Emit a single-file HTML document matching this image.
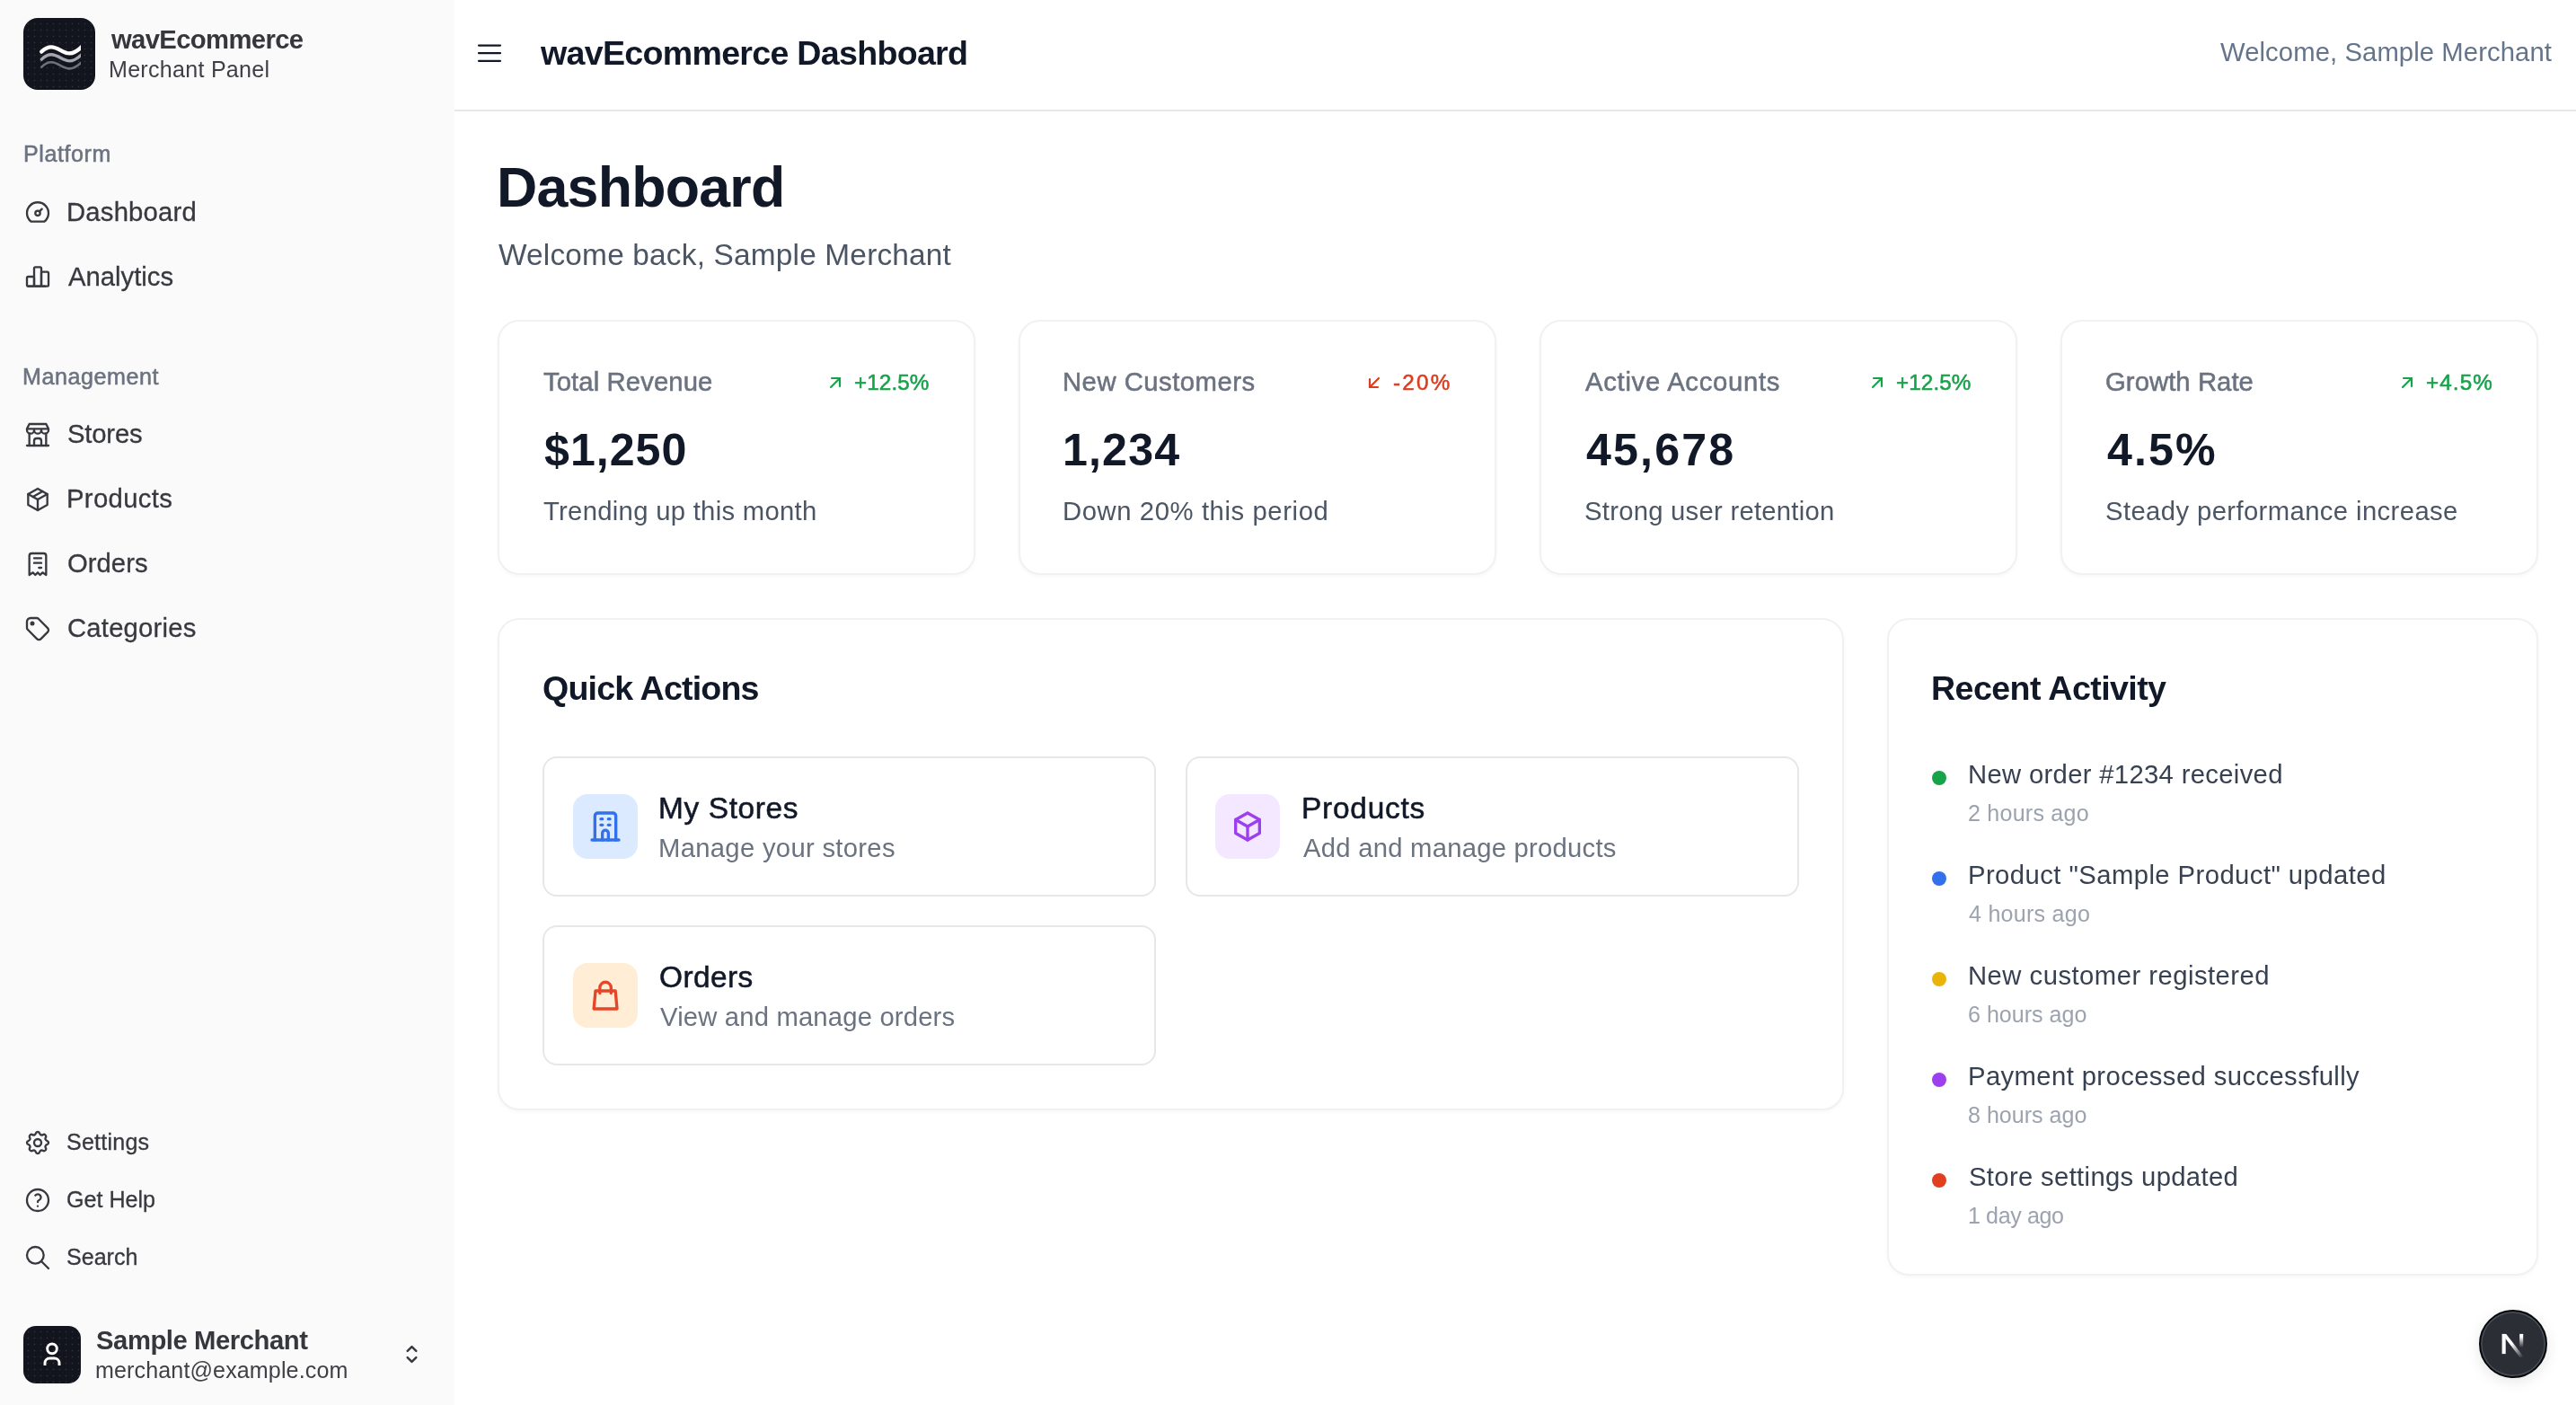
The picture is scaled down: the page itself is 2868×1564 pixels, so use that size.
<!DOCTYPE html>
<html lang="en"><head><meta charset="utf-8"><title>wavEcommerce Dashboard</title>
<style>
html,body{margin:0;padding:0;width:2868px;height:1564px;overflow:hidden;background:#ffffff;font-family:"Liberation Sans",sans-serif}
@media (max-width:2000px){html{zoom:0.5}}
.b{position:absolute}
.ic{position:absolute;overflow:visible}
.t{position:absolute;white-space:nowrap;will-change:transform;font-family:"Liberation Sans",sans-serif}
</style></head>
<body>
<div class="b" style="left:0px;top:0px;width:506px;height:1564px;background:#fafafa"></div>
<div class="b" style="left:506px;top:122px;width:2362px;height:2px;background:#e5e7eb"></div>
<div class="b" style="left:26px;top:20px;width:80px;height:80px;background-color:#12151d;background-image:radial-gradient(circle,rgba(255,255,255,0.13) 0.7px,transparent 1.1px);background-size:7px 7px;background-position:2px 3px;border-radius:16px"></div>
<svg class="ic" style="left:26px;top:20px" width="80" height="80" viewBox="0 0 80 80" fill="none" stroke-linecap="round">
<defs><clipPath id="lc"><rect x="0" y="0" width="64" height="80"/></clipPath></defs>
<g clip-path="url(#lc)">
<path d="M20.3 37.6 C 23.8 34, 27.5 32.3, 31.3 32.3 C 38 32.3, 44.5 39.4, 51.4 39.4 C 56 39.4, 61 36.5, 67 30" stroke="#ffffff" stroke-width="4.3"/>
<path d="M20.3 46.1 C 23.8 42.5, 27.5 40.8, 31.3 40.8 C 38 40.8, 44.5 47.9, 51.4 47.9 C 56 47.9, 61 45, 67 38.5" stroke="#a4a7ae" stroke-width="3.4"/>
<path d="M20.3 54.6 C 23.8 51, 27.5 49.3, 31.3 49.3 C 38 49.3, 44.5 56.4, 51.4 56.4 C 56 56.4, 61 53.5, 67 47" stroke="#6d717a" stroke-width="2.6"/>
</g></svg>
<svg class="ic" style="left:26px;top:220px" width="32" height="32" viewBox="0 0 24 24" fill="none" stroke="#38393f" stroke-width="1.75" stroke-linecap="round" stroke-linejoin="round"><path d="M12 13m-2 0a2 2 0 1 0 4 0a2 2 0 1 0 -4 0"/><path d="M13.45 11.55l2.05 -2.05"/><path d="M6.4 20a9 9 0 1 1 11.2 0z"/></svg>
<svg class="ic" style="left:26px;top:292px" width="32" height="32" viewBox="0 0 24 24" fill="none" stroke="#38393f" stroke-width="1.75" stroke-linecap="round" stroke-linejoin="round"><path d="M3 13a1 1 0 0 1 1 -1h4a1 1 0 0 1 1 1v6a1 1 0 0 1 -1 1h-4a1 1 0 0 1 -1 -1z"/><path d="M15 9a1 1 0 0 1 1 -1h4a1 1 0 0 1 1 1v10a1 1 0 0 1 -1 1h-4a1 1 0 0 1 -1 -1z"/><path d="M9 5a1 1 0 0 1 1 -1h4a1 1 0 0 1 1 1v14a1 1 0 0 1 -1 1h-4a1 1 0 0 1 -1 -1z"/><path d="M4 20h14"/></svg>
<svg class="ic" style="left:26px;top:468px" width="32" height="32" viewBox="0 0 24 24" fill="none" stroke="#38393f" stroke-width="1.75" stroke-linecap="round" stroke-linejoin="round"><path d="M3 21l18 0"/><path d="M3 7v1a3 3 0 0 0 6 0v-1m0 1a3 3 0 0 0 6 0v-1m0 1a3 3 0 0 0 6 0v-1h-18l2 -4h14l2 4"/><path d="M5 21l0 -10.15"/><path d="M19 21l0 -10.15"/><path d="M9 21v-4a2 2 0 0 1 2 -2h2a2 2 0 0 1 2 2v4"/></svg>
<svg class="ic" style="left:26px;top:540px" width="32" height="32" viewBox="0 0 24 24" fill="none" stroke="#38393f" stroke-width="1.75" stroke-linecap="round" stroke-linejoin="round"><path d="M12 3l8 4.5l0 9l-8 4.5l-8 -4.5l0 -9l8 -4.5"/><path d="M12 12l8 -4.5"/><path d="M12 12l0 9"/><path d="M12 12l-8 -4.5"/><path d="M16 5.25l-8 4.5"/></svg>
<svg class="ic" style="left:26px;top:612px" width="32" height="32" viewBox="0 0 24 24" fill="none" stroke="#38393f" stroke-width="1.75" stroke-linecap="round" stroke-linejoin="round"><path d="M5 21v-16a2 2 0 0 1 2 -2h10a2 2 0 0 1 2 2v16l-3 -2l-2 2l-2 -2l-2 2l-2 -2l-3 2m4 -14h6m-6 4h6m-2 4h2"/></svg>
<svg class="ic" style="left:26px;top:684px" width="32" height="32" viewBox="0 0 24 24" fill="none" stroke="#38393f" stroke-width="1.75" stroke-linecap="round" stroke-linejoin="round"><path d="M7.5 7.5m-1 0a1 1 0 1 0 2 0a1 1 0 1 0 -2 0"/><path d="M3 6v5.172a2 2 0 0 0 .586 1.414l7.71 7.71a2.41 2.41 0 0 0 3.408 0l5.592 -5.592a2.41 2.41 0 0 0 0 -3.408l-7.71 -7.71a2 2 0 0 0 -1.414 -.586h-5.172a3 3 0 0 0 -3 3z"/></svg>
<svg class="ic" style="left:26px;top:1256px" width="32" height="32" viewBox="0 0 24 24" fill="none" stroke="#38393f" stroke-width="1.75" stroke-linecap="round" stroke-linejoin="round"><path d="M10.325 4.317c.426 -1.756 2.924 -1.756 3.35 0a1.724 1.724 0 0 0 2.573 1.066c1.543 -.94 3.31 .826 2.37 2.37a1.724 1.724 0 0 0 1.065 2.572c1.756 .426 1.756 2.924 0 3.35a1.724 1.724 0 0 0 -1.066 2.573c.94 1.543 -.826 3.31 -2.37 2.37a1.724 1.724 0 0 0 -2.572 1.065c-.426 1.756 -2.924 1.756 -3.35 0a1.724 1.724 0 0 0 -2.573 -1.066c-1.543 .94 -3.31 -.826 -2.37 -2.37a1.724 1.724 0 0 0 -1.065 -2.572c-1.756 -.426 -1.756 -2.924 0 -3.35a1.724 1.724 0 0 0 1.066 -2.573c-.94 -1.543 .826 -3.31 2.37 -2.37c1 .608 2.296 .07 2.572 -1.065z"/><path d="M9 12a3 3 0 1 0 6 0a3 3 0 0 0 -6 0"/></svg>
<svg class="ic" style="left:26px;top:1320px" width="32" height="32" viewBox="0 0 24 24" fill="none" stroke="#38393f" stroke-width="1.75" stroke-linecap="round" stroke-linejoin="round"><path d="M12 12m-9 0a9 9 0 1 0 18 0a9 9 0 1 0 -18 0"/><path d="M12 17l0 .01"/><path d="M12 13.5a1.5 1.5 0 0 1 1 -1.5a2.6 2.6 0 1 0 -3 -4"/></svg>
<svg class="ic" style="left:26px;top:1384px" width="32" height="32" viewBox="0 0 24 24" fill="none" stroke="#38393f" stroke-width="1.75" stroke-linecap="round" stroke-linejoin="round"><path d="M10 10m-7 0a7 7 0 1 0 14 0a7 7 0 1 0 -14 0"/><path d="M21 21l-6 -6"/></svg>
<div class="b" style="left:26px;top:1476px;width:64px;height:64px;background-color:#12151d;background-image:radial-gradient(circle,rgba(255,255,255,0.13) 0.7px,transparent 1.1px);background-size:7px 7px;background-position:2px 3px;border-radius:14px"></div>
<svg class="ic" style="left:42px;top:1492px" width="32" height="32" viewBox="0 0 24 24" fill="none" stroke="#ffffff" stroke-width="2.2" stroke-linecap="round" stroke-linejoin="round"><path d="M8 7a4 4 0 1 0 8 0a4 4 0 0 0 -8 0"/><path d="M6 21v-2a4 4 0 0 1 4 -4h4a4 4 0 0 1 4 4v2" stroke-linecap="butt"/></svg>
<svg class="ic" style="left:443.5px;top:1493.2px" width="29" height="29" viewBox="0 0 24 24" fill="none" stroke="#38393f" stroke-width="2" stroke-linecap="round" stroke-linejoin="round"><path d="M8 9l4 -4l4 4"/><path d="M16 15l-4 4l-4 -4"/></svg>
<svg class="ic" style="left:530px;top:46px" width="30" height="26" viewBox="0 0 30 26" stroke="#111827" stroke-width="2.2" stroke-linecap="round"><path d="M3 4.6h24M3 13.2h24M3 21.8h24"/></svg>
<div class="b" style="left:554px;top:356px;width:532px;height:284px;background:#fff;border:2px solid #f0f1f3;border-radius:24px;box-sizing:border-box;box-shadow:0 2px 4px rgba(16,24,40,0.03)"></div>
<div class="b" style="left:1134px;top:356px;width:532px;height:284px;background:#fff;border:2px solid #f0f1f3;border-radius:24px;box-sizing:border-box;box-shadow:0 2px 4px rgba(16,24,40,0.03)"></div>
<div class="b" style="left:1714px;top:356px;width:532px;height:284px;background:#fff;border:2px solid #f0f1f3;border-radius:24px;box-sizing:border-box;box-shadow:0 2px 4px rgba(16,24,40,0.03)"></div>
<div class="b" style="left:2294px;top:356px;width:532px;height:284px;background:#fff;border:2px solid #f0f1f3;border-radius:24px;box-sizing:border-box;box-shadow:0 2px 4px rgba(16,24,40,0.03)"></div>
<div class="b" style="left:554px;top:688px;width:1499px;height:548px;background:#fff;border:2px solid #f0f1f3;border-radius:24px;box-sizing:border-box;box-shadow:0 2px 4px rgba(16,24,40,0.03)"></div>
<div class="b" style="left:2101px;top:688px;width:725px;height:732px;background:#fff;border:2px solid #f0f1f3;border-radius:24px;box-sizing:border-box;box-shadow:0 2px 4px rgba(16,24,40,0.03)"></div>
<div class="b" style="left:604px;top:842px;width:683px;height:156px;background:#fff;border:2px solid #e5e7eb;border-radius:16px;box-sizing:border-box"></div>
<div class="b" style="left:1319.5px;top:842px;width:683.5px;height:156px;background:#fff;border:2px solid #e5e7eb;border-radius:16px;box-sizing:border-box"></div>
<div class="b" style="left:604px;top:1030px;width:683px;height:156px;background:#fff;border:2px solid #e5e7eb;border-radius:16px;box-sizing:border-box"></div>
<div class="b" style="left:638px;top:884px;width:72px;height:72px;background:#dbeafe;border-radius:16px"></div>
<svg class="ic" style="left:654px;top:900px" width="40" height="40" viewBox="0 0 24 24" fill="none" stroke="#3370eb" stroke-width="2" stroke-linecap="round" stroke-linejoin="round"><path d="M3 21h18"/><path d="M5 21v-16a2 2 0 0 1 2 -2h10a2 2 0 0 1 2 2v16"/><path d="M9 7h1"/><path d="M14 7h1"/><path d="M9 11h1"/><path d="M14 11h1"/><path d="M10 21v-4.5a2 2 0 0 1 4 0v4.5"/></svg>
<div class="b" style="left:1353px;top:884px;width:72px;height:72px;background:#f3e8ff;border-radius:16px"></div>
<svg class="ic" style="left:1369px;top:900px" width="40" height="40" viewBox="0 0 24 24" fill="none" stroke="#9c40ef" stroke-width="2" stroke-linecap="round" stroke-linejoin="round"><path d="M12 3l8 4.5l0 9l-8 4.5l-8 -4.5l0 -9l8 -4.5"/><path d="M12 12l8 -4.5"/><path d="M12 12l0 9"/><path d="M12 12l-8 -4.5"/></svg>
<div class="b" style="left:638px;top:1072px;width:72px;height:72px;background:#ffedd5;border-radius:16px"></div>
<svg class="ic" style="left:654px;top:1088px" width="40" height="40" viewBox="0 0 24 24" fill="none" stroke="#e5462a" stroke-width="2" stroke-linecap="round" stroke-linejoin="round"><path d="M5.4 9h13.3l1.1 12h-15.5z"/><path d="M8.3 10.5v-3.6a3.75 3.75 0 0 1 7.5 0v3.6"/></svg>
<div class="b" style="left:2151px;top:858px;width:16px;height:16px;background:#16a34a;border-radius:50%"></div>
<div class="b" style="left:2151px;top:970px;width:16px;height:16px;background:#3370eb;border-radius:50%"></div>
<div class="b" style="left:2151px;top:1082px;width:16px;height:16px;background:#eab308;border-radius:50%"></div>
<div class="b" style="left:2151px;top:1194px;width:16px;height:16px;background:#9c40ef;border-radius:50%"></div>
<div class="b" style="left:2151px;top:1306px;width:16px;height:16px;background:#e0401f;border-radius:50%"></div>
<div class="b" style="left:2760px;top:1458px;width:76px;height:76px;background:#2b2e35;border-radius:50%;border:2px solid #08090b;box-sizing:border-box;box-shadow:inset 0 0 0 1.5px #4a505c, 0 4px 16px rgba(0,0,0,0.10)"></div>
<svg class="ic" style="left:2760px;top:1458px" width="76" height="76" viewBox="0 0 76 76"><defs><linearGradient id="gd" gradientUnits="userSpaceOnUse" x1="36" y1="38" x2="49" y2="53"><stop offset="0" stop-color="#fff"/><stop offset="1" stop-color="#fff" stop-opacity="0"/></linearGradient><linearGradient id="gv" gradientUnits="userSpaceOnUse" x1="0" y1="30" x2="0" y2="42"><stop offset="0" stop-color="#fff"/><stop offset="1" stop-color="#fff" stop-opacity="0"/></linearGradient></defs><rect x="25.6" y="26.9" width="4.1" height="22.2" fill="#fff"/><polygon points="25.6,26.9 30.3,26.9 50.2,53 45.5,53" fill="url(#gd)"/><rect x="45.2" y="26.9" width="4" height="16" fill="url(#gv)"/></svg>
<svg class="ic" style="left:918.2px;top:414px" width="24" height="24" viewBox="0 0 24 24" fill="none" stroke="#16a34a" stroke-width="2.2" stroke-linecap="round" stroke-linejoin="round"><path d="M17 7l-10 10"/><path d="M8 7l9 0l0 9"/></svg>
<svg class="ic" style="left:1518.2px;top:414px" width="24" height="24" viewBox="0 0 24 24" fill="none" stroke="#dc3d1f" stroke-width="2.2" stroke-linecap="round" stroke-linejoin="round"><path d="M17 7l-10 10"/><path d="M16 17l-9 0l0 -9"/></svg>
<svg class="ic" style="left:2078.2px;top:414px" width="24" height="24" viewBox="0 0 24 24" fill="none" stroke="#16a34a" stroke-width="2.2" stroke-linecap="round" stroke-linejoin="round"><path d="M17 7l-10 10"/><path d="M8 7l9 0l0 9"/></svg>
<svg class="ic" style="left:2667.7px;top:414px" width="24" height="24" viewBox="0 0 24 24" fill="none" stroke="#16a34a" stroke-width="2.2" stroke-linecap="round" stroke-linejoin="round"><path d="M17 7l-10 10"/><path d="M8 7l9 0l0 9"/></svg>
<div class="t" style="left:124.00px;top:25.96px;font-size:29.26px;line-height:37px;color:#36373c;font-weight:700;letter-spacing:-0.642px">wavEcommerce</div>
<div class="t" style="left:121.00px;top:61.80px;font-size:25.08px;line-height:31px;color:#3f3f46;letter-spacing:0.264px">Merchant Panel</div>
<div class="t" style="left:25.90px;top:155.50px;font-size:25.08px;line-height:31px;color:#6b7280;letter-spacing:0.574px;-webkit-text-stroke:0.55px currentColor">Platform</div>
<div class="t" style="left:73.90px;top:217.96px;font-size:29.26px;line-height:37px;color:#38393f;letter-spacing:0.209px;-webkit-text-stroke:0.3px currentColor">Dashboard</div>
<div class="t" style="left:75.50px;top:289.96px;font-size:29.26px;line-height:37px;color:#38393f;-webkit-text-stroke:0.3px currentColor">Analytics</div>
<div class="t" style="left:24.90px;top:404.00px;font-size:25.08px;line-height:31px;color:#6b7280;letter-spacing:0.554px;-webkit-text-stroke:0.55px currentColor">Management</div>
<div class="t" style="left:74.60px;top:465.06px;font-size:29.26px;line-height:37px;color:#38393f;letter-spacing:-0.182px;-webkit-text-stroke:0.3px currentColor">Stores</div>
<div class="t" style="left:73.60px;top:537.06px;font-size:29.26px;line-height:37px;color:#38393f;letter-spacing:0.357px;-webkit-text-stroke:0.3px currentColor">Products</div>
<div class="t" style="left:74.60px;top:609.06px;font-size:29.26px;line-height:37px;color:#38393f;letter-spacing:0.027px;-webkit-text-stroke:0.3px currentColor">Orders</div>
<div class="t" style="left:74.60px;top:681.06px;font-size:29.26px;line-height:37px;color:#38393f;letter-spacing:0.208px;-webkit-text-stroke:0.3px currentColor">Categories</div>
<div class="t" style="left:74.00px;top:1256.20px;font-size:25.08px;line-height:31px;color:#38393f;letter-spacing:0.218px;-webkit-text-stroke:0.3px currentColor">Settings</div>
<div class="t" style="left:74.00px;top:1320.20px;font-size:25.08px;line-height:31px;color:#38393f;-webkit-text-stroke:0.3px currentColor">Get Help</div>
<div class="t" style="left:74.00px;top:1384.20px;font-size:25.08px;line-height:31px;color:#38393f;-webkit-text-stroke:0.3px currentColor">Search</div>
<div class="t" style="left:106.80px;top:1473.56px;font-size:29.26px;line-height:37px;color:#36373c;font-weight:700;letter-spacing:-0.447px">Sample Merchant</div>
<div class="t" style="left:105.80px;top:1510.30px;font-size:25.08px;line-height:31px;color:#3f3f46;letter-spacing:0.119px">merchant@example.com</div>
<div class="t" style="left:602.00px;top:35.66px;font-size:37.62px;line-height:47px;color:#111827;font-weight:700;letter-spacing:-0.726px">wavEcommerce Dashboard</div>
<div class="t" style="left:2472.40px;top:40.06px;font-size:29.26px;line-height:37px;color:#64748b;letter-spacing:0.090px">Welcome, Sample Merchant</div>
<div class="t" style="left:553.40px;top:169.26px;font-size:62.7px;line-height:78px;color:#111827;font-weight:700;letter-spacing:-0.767px">Dashboard</div>
<div class="t" style="left:555.00px;top:262.61px;font-size:33.44px;line-height:42px;color:#4b5563;letter-spacing:0.172px">Welcome back, Sample Merchant</div>
<div class="t" style="left:605.20px;top:406.86px;font-size:29.26px;line-height:37px;color:#6b7280;letter-spacing:0.106px;-webkit-text-stroke:0.55px currentColor">Total Revenue</div>
<div class="t" style="left:951.20px;top:410.60px;font-size:24.24px;line-height:30px;color:#16a34a;letter-spacing:0.096px;-webkit-text-stroke:0.55px currentColor">+12.5%</div>
<div class="t" style="left:605.80px;top:470.21px;font-size:50.16px;line-height:63px;color:#111827;font-weight:700;letter-spacing:0.997px">$1,250</div>
<div class="t" style="left:605.20px;top:551.26px;font-size:29.26px;line-height:37px;color:#4b5563;letter-spacing:0.294px">Trending up this month</div>
<div class="t" style="left:1183.20px;top:406.86px;font-size:29.26px;line-height:37px;color:#6b7280;letter-spacing:0.498px;-webkit-text-stroke:0.55px currentColor">New Customers</div>
<div class="t" style="left:1551.20px;top:410.60px;font-size:24.24px;line-height:30px;color:#dc3d1f;letter-spacing:2.258px;-webkit-text-stroke:0.55px currentColor">-20%</div>
<div class="t" style="left:1182.80px;top:470.21px;font-size:50.16px;line-height:63px;color:#111827;font-weight:700;letter-spacing:1.145px">1,234</div>
<div class="t" style="left:1183.20px;top:551.26px;font-size:29.26px;line-height:37px;color:#4b5563;letter-spacing:0.591px">Down 20% this period</div>
<div class="t" style="left:1765.20px;top:406.86px;font-size:29.26px;line-height:37px;color:#6b7280;letter-spacing:0.709px;-webkit-text-stroke:0.55px currentColor">Active Accounts</div>
<div class="t" style="left:2111.20px;top:410.60px;font-size:24.24px;line-height:30px;color:#16a34a;letter-spacing:0.096px;-webkit-text-stroke:0.55px currentColor">+12.5%</div>
<div class="t" style="left:1765.80px;top:470.21px;font-size:50.16px;line-height:63px;color:#111827;font-weight:700;letter-spacing:2.137px">45,678</div>
<div class="t" style="left:1764.20px;top:551.26px;font-size:29.26px;line-height:37px;color:#4b5563;letter-spacing:0.255px">Strong user retention</div>
<div class="t" style="left:2344.20px;top:406.86px;font-size:29.26px;line-height:37px;color:#6b7280;letter-spacing:0.068px;-webkit-text-stroke:0.55px currentColor">Growth Rate</div>
<div class="t" style="left:2700.70px;top:410.60px;font-size:24.24px;line-height:30px;color:#16a34a;letter-spacing:1.115px;-webkit-text-stroke:0.55px currentColor">+4.5%</div>
<div class="t" style="left:2345.80px;top:470.21px;font-size:50.16px;line-height:63px;color:#111827;font-weight:700;letter-spacing:2.059px">4.5%</div>
<div class="t" style="left:2344.20px;top:551.26px;font-size:29.26px;line-height:37px;color:#4b5563;letter-spacing:0.396px">Steady performance increase</div>
<div class="t" style="left:604.00px;top:742.76px;font-size:37.62px;line-height:47px;color:#111827;font-weight:700;letter-spacing:-0.830px">Quick Actions</div>
<div class="t" style="left:733.00px;top:879.01px;font-size:33.44px;line-height:42px;color:#111827;letter-spacing:0.635px;-webkit-text-stroke:0.55px currentColor">My Stores</div>
<div class="t" style="left:733.00px;top:925.56px;font-size:29.26px;line-height:37px;color:#6b7280;letter-spacing:0.295px">Manage your stores</div>
<div class="t" style="left:1448.50px;top:879.01px;font-size:33.44px;line-height:42px;color:#111827;letter-spacing:0.760px;-webkit-text-stroke:0.55px currentColor">Products</div>
<div class="t" style="left:1450.50px;top:925.56px;font-size:29.26px;line-height:37px;color:#6b7280;letter-spacing:0.241px">Add and manage products</div>
<div class="t" style="left:734.00px;top:1067.01px;font-size:33.44px;line-height:42px;color:#111827;letter-spacing:0.414px;-webkit-text-stroke:0.55px currentColor">Orders</div>
<div class="t" style="left:735.00px;top:1113.56px;font-size:29.26px;line-height:37px;color:#6b7280;letter-spacing:0.165px">View and manage orders</div>
<div class="t" style="left:2149.90px;top:742.86px;font-size:37.62px;line-height:47px;color:#111827;font-weight:700;letter-spacing:-0.593px">Recent Activity</div>
<div class="t" style="left:2190.50px;top:844.36px;font-size:29.26px;line-height:37px;color:#374151;letter-spacing:0.321px">New order #1234 received</div>
<div class="t" style="left:2191.20px;top:890.00px;font-size:25.08px;line-height:31px;color:#9ca3af;letter-spacing:0.219px">2 hours ago</div>
<div class="t" style="left:2190.50px;top:956.36px;font-size:29.26px;line-height:37px;color:#374151;letter-spacing:0.436px">Product &quot;Sample Product&quot; updated</div>
<div class="t" style="left:2192.20px;top:1002.00px;font-size:25.08px;line-height:31px;color:#9ca3af;letter-spacing:0.249px">4 hours ago</div>
<div class="t" style="left:2190.50px;top:1068.36px;font-size:29.26px;line-height:37px;color:#374151;letter-spacing:0.475px">New customer registered</div>
<div class="t" style="left:2191.20px;top:1114.00px;font-size:25.08px;line-height:31px;color:#9ca3af">6 hours ago</div>
<div class="t" style="left:2190.50px;top:1180.36px;font-size:29.26px;line-height:37px;color:#374151;letter-spacing:0.394px">Payment processed successfully</div>
<div class="t" style="left:2191.20px;top:1226.00px;font-size:25.08px;line-height:31px;color:#9ca3af">8 hours ago</div>
<div class="t" style="left:2191.50px;top:1292.36px;font-size:29.26px;line-height:37px;color:#374151;letter-spacing:0.337px">Store settings updated</div>
<div class="t" style="left:2191.20px;top:1338.00px;font-size:25.08px;line-height:31px;color:#9ca3af;letter-spacing:-0.401px">1 day ago</div>
</body></html>
